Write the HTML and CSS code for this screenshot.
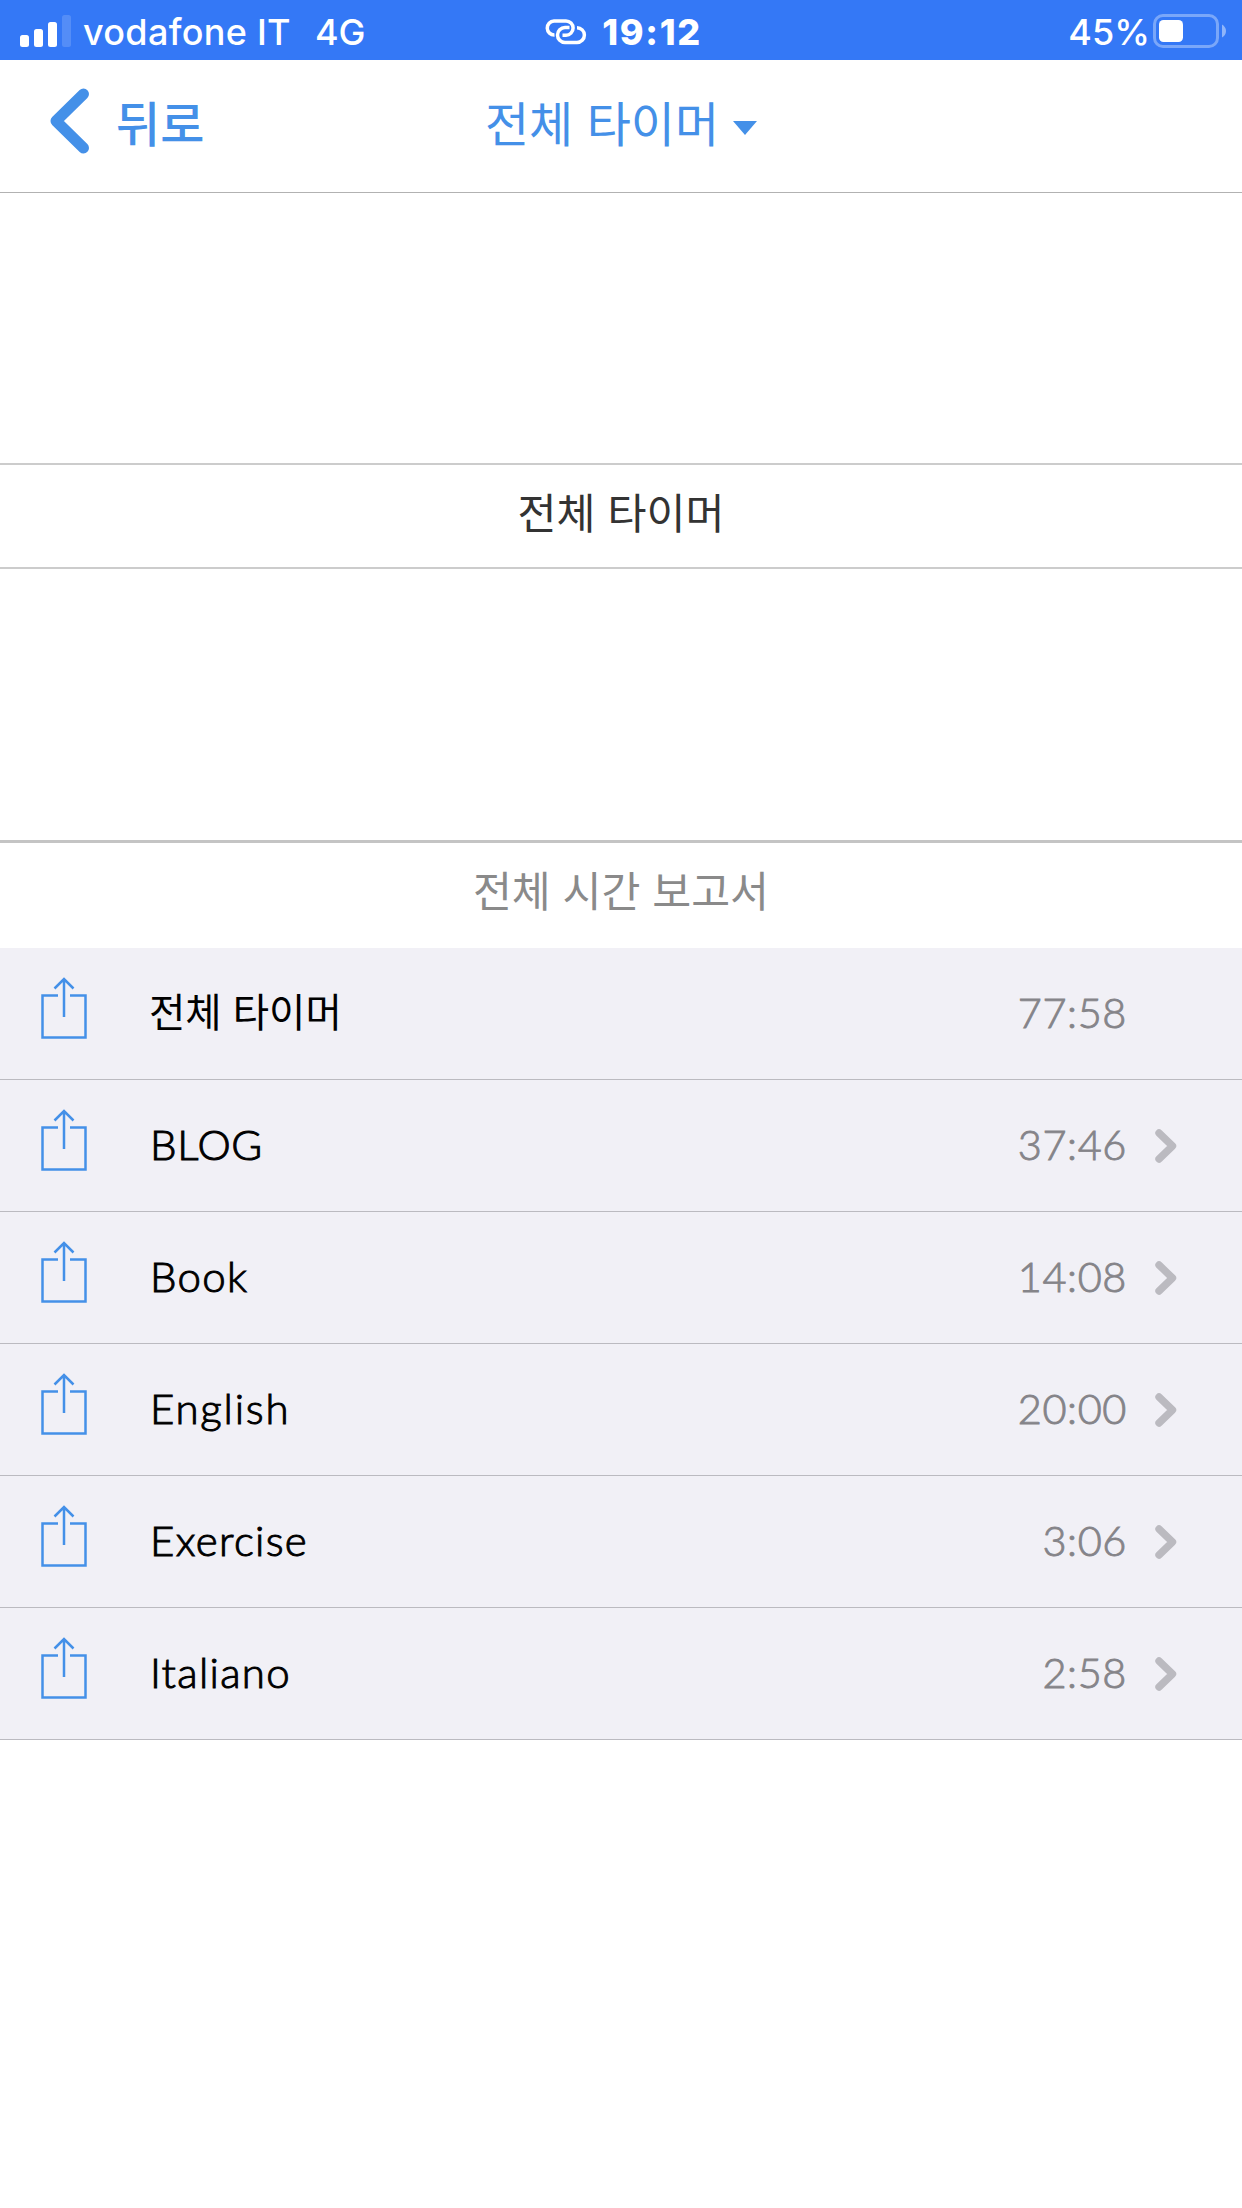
FILE: index.html
```html
<!DOCTYPE html>
<html lang="ko">
<head>
    <meta charset="UTF-8">
    <meta name="viewport" content="width=device-width, initial-scale=1.0">
    <title>전체 시간 보고서</title>
    <link rel="stylesheet" href="styles.css">
</head>
<body>
    <!-- Shared icons -->
    <svg class="sprite" width="0" height="0">
        <symbol id="share" viewBox="0 0 46 62">
            <path d="M17 18.5H1.5V60.5H44.5V18.5H29M23 40V2M13.5 11.5L23 2L32.5 11.5" fill="none" stroke="#4490e8" stroke-width="2.5"/>
        </symbol>
        <symbol id="chevron" viewBox="0 0 22 34">
            <path d="M4 4L17.5 17L4 30" fill="none" stroke="#bbbac0" stroke-width="7.4" stroke-linecap="round" stroke-linejoin="round"/>
        </symbol>
    </svg>

    <div class="status-bar">
        <div class="status-left">
            <svg class="signal" width="51" height="32" viewBox="0 0 51 32">
                <rect x="0" y="20" width="9" height="12" rx="2.5"/>
                <rect x="14" y="14" width="9" height="18" rx="2.5"/>
                <rect x="28" y="7" width="9" height="25" rx="2.5"/>
                <rect x="42" y="0" width="9" height="32" rx="2.5" opacity="0.16"/>
            </svg>
            <span class="carrier">vodafone IT</span>
            <span class="network">4G</span>
        </div>
        <div class="status-center">
            <svg class="link" width="42" height="26" viewBox="0 0 42 26">
                <path d="M9.5 16A7 7 0 0 1 9 2H21A7.1 7.1 0 0 1 21 16.2H17.5M24.500 8.500H20A7.500 7.500 0 0 0 20 23.500H32A7.400 7.400 0 0 0 32 8.700" fill="none" stroke="#fff" stroke-width="3.5"/>
            </svg>
            <span class="clock">19:12</span>
        </div>
        <div class="status-right">
            <span class="percent">45%</span>
            <svg class="battery" width="74" height="34" viewBox="0 0 74 34">
                <rect x="1.5" y="1.5" width="63" height="31" rx="8.5" fill="none" stroke="#fff" stroke-opacity="0.35" stroke-width="3"/>
                <rect x="6" y="6" width="24" height="22" rx="4.5" fill="#fff"/>
                <path d="M69 10.5Q73 13 73 17T69 23.5Z" fill="#fff" fill-opacity="0.45"/>
            </svg>
        </div>
    </div>

    <div class="nav-bar">
        <div class="back">
            <svg width="40" height="66" viewBox="0 0 40 66">
                <path d="M33.5 6L6 33L33.5 60" fill="none" stroke="#4490e8" stroke-width="11" stroke-linecap="round" stroke-linejoin="round"/>
            </svg>
            <span>뒤로</span>
        </div>
        <div class="nav-title">
            <span>전체 타이머</span>
            <svg width="24" height="14" viewBox="0 0 24 14"><path d="M0 0H24L12 14Z" fill="#4490e8"/></svg>
        </div>
    </div>

    <div class="picker">
        <div class="picker-item">전체 타이머</div>
    </div>

    <h1 class="report-title">전체 시간 보고서</h1>

    <ul class="timers">
        <li class="timer">
            <svg class="share"><use href="#share"/></svg>
            <span class="name korean">전체 타이머</span>
            <span class="time">77:58</span>
        </li>
        <li class="timer">
            <svg class="share"><use href="#share"/></svg>
            <span class="name caps">BLOG</span>
            <span class="time">37:46</span>
            <svg class="chevron"><use href="#chevron"/></svg>
        </li>
        <li class="timer">
            <svg class="share"><use href="#share"/></svg>
            <span class="name">Book</span>
            <span class="time">14:08</span>
            <svg class="chevron"><use href="#chevron"/></svg>
        </li>
        <li class="timer">
            <svg class="share"><use href="#share"/></svg>
            <span class="name wide">English</span>
            <span class="time">20:00</span>
            <svg class="chevron"><use href="#chevron"/></svg>
        </li>
        <li class="timer">
            <svg class="share"><use href="#share"/></svg>
            <span class="name">Exercise</span>
            <span class="time">3:06</span>
            <svg class="chevron"><use href="#chevron"/></svg>
        </li>
        <li class="timer">
            <svg class="share"><use href="#share"/></svg>
            <span class="name">Italiano</span>
            <span class="time">2:58</span>
            <svg class="chevron"><use href="#chevron"/></svg>
        </li>
    </ul>
</body>
</html>
```
FILE: styles.css
```css
* {
    margin: 0;
    padding: 0;
    box-sizing: border-box;
}

body {
    width: 1242px;
    min-height: 2208px;
    background: #fff;
    font-family: Lato, "Noto Sans CJK KR", sans-serif;
}

svg {
    display: block;
    flex-shrink: 0;
}

.sprite {
    position: absolute;
}

/* Status bar */
.status-bar {
    display: grid;
    grid-template-columns: 1fr auto 1fr;
    height: 60px;
    padding: 0 15px 0 20px;
    background: #3478f6;
    color: #fff;
    font-family: Inter, sans-serif;
    font-size: 36px;
    font-weight: 500;
    line-height: 60px;
    white-space: nowrap;
}

.status-left,
.status-center,
.status-right {
    display: flex;
    align-items: center;
}

.status-right {
    justify-content: flex-end;
}

.status-bar span {
    padding-top: 2px;
}

.signal {
    margin-top: -1px;
    fill: #fff;
}

.carrier {
    margin-left: 12px;
    letter-spacing: 0.3px;
}

.network {
    margin-left: 24px;
}

.link {
    margin-top: 2px;
}

.clock {
    margin-left: 15px;
    font-weight: 800;
    letter-spacing: 1.7px;
}

.percent {
    margin-right: 3px;
}

/* Navigation */
.nav-bar {
    display: grid;
    grid-template-columns: 1fr auto 1fr;
    align-items: center;
    height: 133px;
    padding: 0 50px 10px 50px;
    border-bottom: 1px solid #b2b2b2;
    color: #4490e8;
    font-family: "Noto Sans CJK KR", sans-serif;
    font-size: 48px;
    line-height: 60px;
}

.back {
    display: flex;
    align-items: center;
    gap: 26px;
    font-weight: 500;
}

.nav-title {
    display: flex;
    align-items: center;
    gap: 14px;
}

.nav-title svg {
    margin-top: 14px;
}

/* Picker */
.picker {
    display: flex;
    flex-direction: column;
    justify-content: center;
    height: 650px;
    padding-bottom: 1px;
    border-bottom: 3px solid #c4c4c4;
}

.picker-item {
    height: 106px;
    border-top: 2px solid #ccc;
    border-bottom: 2px solid #ccc;
    color: #333;
    font-family: "Noto Sans CJK KR", sans-serif;
    font-size: 42.4px;
    line-height: 92px;
    text-align: center;
}

.report-title {
    height: 105px;
    color: #8a8a8a;
    font-family: "Noto Sans CJK KR", sans-serif;
    font-size: 42.3px;
    font-weight: 400;
    line-height: 91px;
    text-align: center;
}

/* Timer list */
.timers {
    list-style: none;
}

.timer {
    display: flex;
    align-items: center;
    height: 132px;
    padding-left: 41px;
    padding-right: 65px;
    padding-bottom: 3px;
    border-bottom: 1px solid #bbbac0;
    background: #f1f0f6;
}

.share {
    width: 46px;
    height: 62px;
    margin-top: -8px;
}

.name {
    flex: 1;
    margin-left: 63px;
    color: #000;
    font-size: 42px;
    font-weight: 300;
    letter-spacing: 1.3px;
    -webkit-text-stroke: 1px #000;
}

.caps {
    letter-spacing: 0.7px;
}

.wide {
    letter-spacing: 1.8px;
}

.korean {
    margin-left: 62px;
    padding-bottom: 5px;
    font-family: "Noto Sans CJK KR", sans-serif;
    font-size: 39.5px;
    font-weight: 400;
    letter-spacing: 0;
    -webkit-text-stroke: 0;
}

.time {
    width: 150px;
    color: #858489;
    font-size: 41.5px;
    font-weight: 300;
    letter-spacing: 0.6px;
    text-align: right;
    -webkit-text-stroke: 0.9px #858489;
}

.chevron {
    width: 22px;
    height: 34px;
    margin-top: 3px;
    margin-left: 28px;
}

.time:last-child {
    margin-right: 50px;
}
```
